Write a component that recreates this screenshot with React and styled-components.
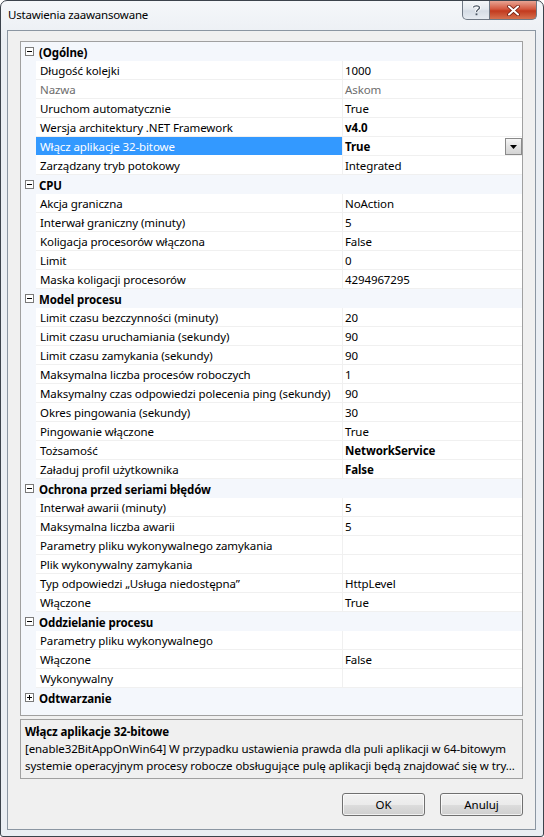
import React from "react";
import styled, { createGlobalStyle, css } from "styled-components";

const FONT = `"Noto Sans", "Open Sans", sans-serif`;

const GlobalStyle = createGlobalStyle`
  html, body { margin: 0; padding: 0; background: #ffffff; }
  * { box-sizing: border-box; }
  body { font-family: ${FONT}; font-size: 11.5px; letter-spacing: -0.1px; color: #000; }
`;

const Window = styled.div`
  width: 544px;
  height: 837px;
  border: 1px solid #3c434c;
  border-radius: 7px 7px 3px 3px;
  background: linear-gradient(180deg, #f5f7fa 0%, #eaeef3 40px, #eaeef3 100%);
  display: flex;
  flex-direction: column;
  overflow: hidden;
`;

const TitleBar = styled.div`
  height: 29px;
  display: flex;
  align-items: flex-start;
  flex-shrink: 0;
`;

const Title = styled.div`
  padding: 6px 0 0 7px;
  font-size: 11.5px;
  letter-spacing: -0.2px;
  color: #000;
  flex: 1;
`;

const CaptionButton = styled.div`
  height: 19px;
  width: ${(p) => p.$w}px;
  display: flex;
  align-items: center;
  justify-content: center;
  border: 1px solid #6f7884;
  border-top: none;
  ${(p) =>
    p.$close
      ? css`
          background: linear-gradient(180deg, #e8a493 0%, #d4583f 45%, #c23a1e 55%, #d6714f 100%);
          border-radius: 0 0 5px 0;
          border-left: none;
        `
      : css`
          background: linear-gradient(180deg, #f4f6f8 0%, #e3e8ee 45%, #d5dce5 55%, #e6ebf1 100%);
          border-radius: 0 0 0 5px;
        `}
`;

const CaptionWrap = styled.div`
  display: flex;
  margin-right: 6px;
`;

const Client = styled.div`
  margin: 0 7px 0 6px;
  height: 800px;
  border: 1px solid #8b96a2;
  background: #f0f0f0;
  padding: 10px 12px 13px 12px;
  display: flex;
  flex-direction: column;
`;

const Grid = styled.div`
  height: 675px;
  border: 1px solid #a0a0a0;
  background: #f4f7fc;
  display: flex;
  flex-direction: column;
`;

const Row = styled.div`
  height: 19px;
  display: grid;
  grid-template-columns: 15px 306px 1px 1fr;
  flex-shrink: 0;
`;

const CategoryRow = styled.div`
  height: 19px;
  display: flex;
  align-items: center;
  padding-left: 4px;
  font-weight: bold;
  background: #f4f7fc;
  flex-shrink: 0;
`;

const CategoryText = styled.span`
  margin-left: 5px;
  padding-top: 1px;
`;

const Gutter = styled.div`
  background: #f4f7fc;
`;

const NameCell = styled.div`
  padding: 0 0 0 4px;
  display: flex;
  align-items: center;
  white-space: nowrap;
  overflow: hidden;
  background: ${(p) => (p.$selected ? "#3399ff" : "#ffffff")};
  color: ${(p) => (p.$selected ? "#ffffff" : p.$disabled ? "#6d6d6d" : "#000")};
  border-bottom: 1px solid ${(p) => (p.$selected ? "#ffffff" : "#f0f0f0")};
`;

const Divider = styled.div`
  background: #f0f0f0;
`;

const ValueCell = styled.div`
  padding: 0 0 0 2px;
  display: flex;
  align-items: center;
  white-space: nowrap;
  overflow: hidden;
  background: #ffffff;
  font-weight: ${(p) => (p.$bold ? "bold" : "normal")};
  color: ${(p) => (p.$disabled ? "#6d6d6d" : "#000")};
  border-bottom: 1px solid #f0f0f0;
`;

const ValueText = styled.span`
  flex: 1;
`;

const DropButton = styled.div`
  width: 17px;
  height: 17px;
  align-self: flex-start;
  margin-top: 1px;
  border: 1px solid #8a8a8a;
  background: linear-gradient(180deg, #f6f6f6 0%, #e2e2e2 50%, #d4d4d4 100%);
  display: flex;
  align-items: center;
  justify-content: center;
`;

const Desc = styled.div`
  margin-top: 3px;
  height: 60px;
  border: 1px solid #a0a0a0;
  background: #f0f0f0;
  padding: 3px 4px 0 4px;
  line-height: 17px;
  white-space: nowrap;
  overflow: hidden;
`;

const DescTitle = styled.div`
  font-weight: bold;
`;

const Footer = styled.div`
  margin-top: auto;
  display: flex;
  justify-content: flex-end;
  gap: 15px;
`;

const Button = styled.button`
  width: 83px;
  height: 23px;
  font-family: ${FONT};
  font-size: 11.5px;
  color: #000;
  border: 1px solid #707070;
  border-radius: 3px;
  background: linear-gradient(180deg, #f2f2f2 0%, #ebebeb 50%, #dddddd 51%, #cfcfcf 100%);
  box-shadow: inset 0 0 0 1px rgba(255, 255, 255, 0.7);
  padding: 0;
`;

const ExpandBox = ({ open }) => (
  <svg width="9" height="9" viewBox="0 0 9 9">
    <rect x="0.5" y="0.5" width="8" height="8" fill="#fff" stroke="#7a7a7a" />
    <line x1="2" y1="4.5" x2="7" y2="4.5" stroke="#000" />
    {!open && <line x1="4.5" y1="2" x2="4.5" y2="7" stroke="#000" />}
  </svg>
);

const data = [
  {
    cat: "(Ogólne)",
    items: [
      ["Długość kolejki", "1000"],
      ["Nazwa", "Askom", { disabled: true }],
      ["Uruchom automatycznie", "True"],
      ["Wersja architektury .NET Framework", "v4.0", { bold: true }],
      ["Włącz aplikacje 32-bitowe", "True", { bold: true, selected: true }],
      ["Zarządzany tryb potokowy", "Integrated"],
    ],
  },
  {
    cat: "CPU",
    items: [
      ["Akcja graniczna", "NoAction"],
      ["Interwał graniczny (minuty)", "5"],
      ["Koligacja procesorów włączona", "False"],
      ["Limit", "0"],
      ["Maska koligacji procesorów", "4294967295"],
    ],
  },
  {
    cat: "Model procesu",
    items: [
      ["Limit czasu bezczynności (minuty)", "20"],
      ["Limit czasu uruchamiania (sekundy)", "90"],
      ["Limit czasu zamykania (sekundy)", "90"],
      ["Maksymalna liczba procesów roboczych", "1"],
      ["Maksymalny czas odpowiedzi polecenia ping (sekundy)", "90"],
      ["Okres pingowania (sekundy)", "30"],
      ["Pingowanie włączone", "True"],
      ["Tożsamość", "NetworkService", { bold: true }],
      ["Załaduj profil użytkownika", "False", { bold: true }],
    ],
  },
  {
    cat: "Ochrona przed seriami błędów",
    items: [
      ["Interwał awarii (minuty)", "5"],
      ["Maksymalna liczba awarii", "5"],
      ["Parametry pliku wykonywalnego zamykania", ""],
      ["Plik wykonywalny zamykania", ""],
      ["Typ odpowiedzi „Usługa niedostępna”", "HttpLevel"],
      ["Włączone", "True"],
    ],
  },
  {
    cat: "Oddzielanie procesu",
    items: [
      ["Parametry pliku wykonywalnego", ""],
      ["Włączone", "False"],
      ["Wykonywalny", ""],
    ],
  },
  { cat: "Odtwarzanie", closed: true, items: [] },
];

export default function App() {
  return (
    <>
      <GlobalStyle />
      <Window>
        <TitleBar>
          <Title>Ustawienia zaawansowane</Title>
          <CaptionWrap>
            <CaptionButton $w={28}>
              <svg width="9" height="12" viewBox="0 0 9 12">
                <path d="M1.5 3.5 C1.5 1.3 7.5 1.3 7.5 3.8 C7.5 5.6 4.5 5.6 4.5 8" fill="none" stroke="#fff" strokeWidth="3" />
                <path d="M1.5 3.5 C1.5 1.3 7.5 1.3 7.5 3.8 C7.5 5.6 4.5 5.6 4.5 8" fill="none" stroke="#4a5563" strokeWidth="1.3" />
                <rect x="3.6" y="9.4" width="1.8" height="1.8" fill="#4a5563" />
              </svg>
            </CaptionButton>
            <CaptionButton $w={47} $close>
              <svg width="13" height="11" viewBox="0 0 13 11">
                <path d="M2 1.5 L11 9.5 M11 1.5 L2 9.5" stroke="#6b1a0e" strokeWidth="3.6" strokeLinecap="round" />
                <path d="M2 1.5 L11 9.5 M11 1.5 L2 9.5" stroke="#ffffff" strokeWidth="2" strokeLinecap="round" />
              </svg>
            </CaptionButton>
          </CaptionWrap>
        </TitleBar>
        <Client>
          <Grid>
            {data.map((g) => (
              <React.Fragment key={g.cat}>
                <CategoryRow>
                  <ExpandBox open={!g.closed} />
                  <CategoryText>{g.cat}</CategoryText>
                </CategoryRow>
                {g.items.map(([name, value, opt = {}]) => (
                  <Row key={g.cat + name}>
                    <Gutter />
                    <NameCell $selected={opt.selected} $disabled={opt.disabled}>
                      {name}
                    </NameCell>
                    <Divider />
                    <ValueCell $bold={opt.bold} $disabled={opt.disabled}>
                      <ValueText>{value}</ValueText>
                      {opt.selected && (
                        <DropButton>
                          <svg width="7" height="4" viewBox="0 0 7 4">
                            <path d="M0 0 H7 L3.5 4 Z" fill="#000" />
                          </svg>
                        </DropButton>
                      )}
                    </ValueCell>
                  </Row>
                ))}
              </React.Fragment>
            ))}
          </Grid>
          <Desc>
            <DescTitle>Włącz aplikacje 32-bitowe</DescTitle>
            <div>[enable32BitAppOnWin64] W przypadku ustawienia prawda dla puli aplikacji w 64-bitowym</div>
            <div>systemie operacyjnym procesy robocze obsługujące pulę aplikacji będą znajdować się w try...</div>
          </Desc>
          <Footer>
            <Button>OK</Button>
            <Button>Anuluj</Button>
          </Footer>
        </Client>
      </Window>
    </>
  );
}
